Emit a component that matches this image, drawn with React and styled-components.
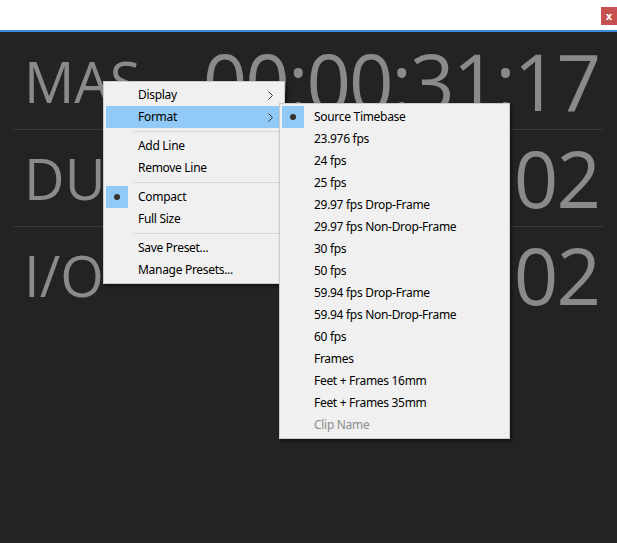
import styled, { createGlobalStyle } from "styled-components";

const GlobalStyle = createGlobalStyle`
  html, body {
    margin: 0;
    padding: 0;
    background: #232323;
  }
`;

const rows = [
  { label: "MAS", time: "00:00:31:17" },
  { label: "DUR", time: "00:00:00:02" },
  { label: "I/O", time: "00:00:02" },
];

const mainItems = [
  { label: "Display", sub: true },
  { label: "Format", sub: true, active: true },
  { sep: true },
  { label: "Add Line" },
  { label: "Remove Line" },
  { sep: true },
  { label: "Compact", checked: true },
  { label: "Full Size" },
  { sep: true },
  { label: "Save Preset..." },
  { label: "Manage Presets..." },
];

const formatItems = [
  { label: "Source Timebase", checked: true },
  { label: "23.976 fps" },
  { label: "24 fps" },
  { label: "25 fps" },
  { label: "29.97 fps Drop-Frame" },
  { label: "29.97 fps Non-Drop-Frame" },
  { label: "30 fps" },
  { label: "50 fps" },
  { label: "59.94 fps Drop-Frame" },
  { label: "59.94 fps Non-Drop-Frame" },
  { label: "60 fps" },
  { label: "Frames" },
  { label: "Feet + Frames 16mm" },
  { label: "Feet + Frames 35mm" },
  { label: "Clip Name", disabled: true },
];

const Chevron = () => (
  <svg width="5" height="9" viewBox="0 0 5 9">
    <path d="M0.5 0.5 L4.5 4.5 L0.5 8.5" fill="none" stroke="#333" strokeWidth="1" />
  </svg>
);

const MenuList = ({ items, left, top, width }) => (
  <Menu style={{ left, top, width }}>
    {items.map((item, i) =>
      item.sep ? (
        <Separator key={i} />
      ) : (
        <Item key={i} $active={item.active} $disabled={item.disabled}>
          <Check $on={item.checked}>{item.checked && <Dot />}</Check>
          <ItemLabel>{item.label}</ItemLabel>
          {item.sub && <Chevron />}
        </Item>
      )
    )}
  </Menu>
);

export default function App() {
  return (
    <>
      <GlobalStyle />
      <Window>
        <TitleBar>
          <CloseButton>x</CloseButton>
        </TitleBar>
        <Panel>
          {rows.map((r) => (
            <Row key={r.label}>
              <Label>{r.label}</Label>
              <Timecode>{r.time}</Timecode>
            </Row>
          ))}
        </Panel>
        <MenuList items={mainItems} left={103} top={81} width={176} />
        <MenuList items={formatItems} left={279} top={103} width={225} />
      </Window>
    </>
  );
}

const Window = styled.div`
  position: relative;
  width: 617px;
  height: 543px;
  overflow: hidden;
  background: #232323;
`;

const TitleBar = styled.div`
  height: 32px;
  box-sizing: border-box;
  background: #ffffff;
  border-bottom: 2px solid #3b8ad9;
  display: flex;
  justify-content: flex-end;
  align-items: flex-start;
  padding-top: 7px;
`;

const CloseButton = styled.div`
  width: 16px;
  height: 18px;
  background: #c75050;
  color: #ffffff;
  font: bold 10px "DejaVu Sans", sans-serif;
  display: flex;
  align-items: center;
  justify-content: center;
`;

const Panel = styled.div`
  padding: 1px 14px 0;
`;

const Row = styled.div`
  height: 96px;
  display: flex;
  align-items: center;
  justify-content: space-between;
  padding: 0 4px 0 10px;
  border-bottom: 1px solid #3a3a3a;
  &:last-child {
    border-bottom: none;
  }
`;

const Label = styled.div`
  font: 400 56px "Open Sans", sans-serif;
  color: #8a8a8a;
  white-space: nowrap;
`;

const Timecode = styled.div`
  font: 400 78px "Open Sans", sans-serif;
  color: #8a8a8a;
  letter-spacing: -2px;
  white-space: nowrap;
`;

const Menu = styled.div`
  position: absolute;
  background: #f0f0f0;
  border: 1px solid #cccccc;
  padding: 2px;
  box-shadow: 2px 2px 3px rgba(0, 0, 0, 0.5);
  font: 12px "Noto Sans", sans-serif;
  letter-spacing: -0.3px;
`;

const Item = styled.div`
  height: 22px;
  display: flex;
  align-items: center;
  padding-right: 9px;
  background: ${(p) => (p.$active ? "#91c9f7" : "transparent")};
  color: ${(p) => (p.$disabled ? "#8d8d8d" : "#000000")};
`;

const Check = styled.div`
  width: 22px;
  height: 22px;
  display: flex;
  align-items: center;
  justify-content: center;
  background: ${(p) => (p.$on ? "#91c9f7" : "transparent")};
`;

const Dot = styled.span`
  width: 6px;
  height: 6px;
  border-radius: 50%;
  background: #333333;
`;

const ItemLabel = styled.span`
  flex: 1;
  margin-left: 10px;
  padding-bottom: 1px;
  white-space: nowrap;
`;

const Separator = styled.div`
  height: 7px;
  display: flex;
  align-items: center;
  padding-left: 27px;
  &::after {
    content: "";
    flex: 1;
    height: 1px;
    background: #d7d7d7;
  }
`;
